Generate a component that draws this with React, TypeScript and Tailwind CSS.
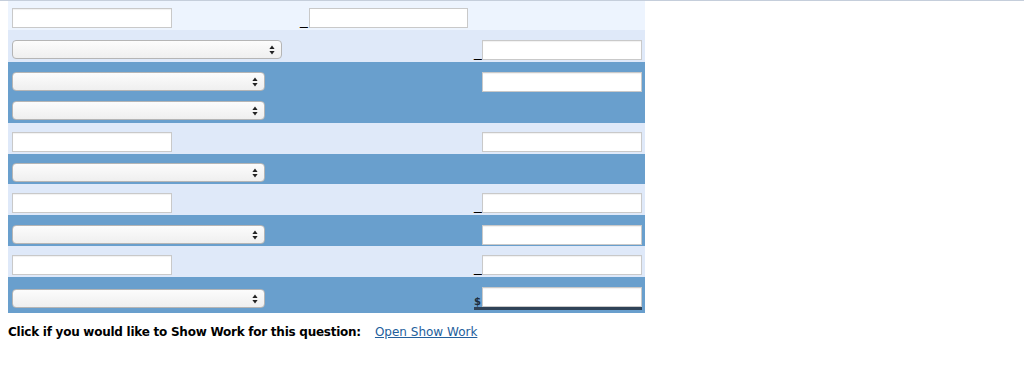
import { ReactNode } from "react";

const TextBox = () => (
  <div className="h-[20px] w-[160px] border border-[#c9c9c9] bg-white shadow-[inset_0_1px_1px_rgba(0,0,0,0.06)]" />
);

const Arrows = () => (
  <svg width="6" height="10" viewBox="0 0 6 10" className="text-[#222]">
    <path d="M3 0.5 L5.6 4 L0.4 4 Z" fill="currentColor" />
    <path d="M3 9.5 L5.6 6 L0.4 6 Z" fill="currentColor" />
  </svg>
);

const Select = ({ wide }: { wide?: boolean }) => (
  <div
    className={
      (wide ? "w-[270px] " : "w-[253px] ") +
      "flex h-[19px] items-center justify-end rounded-[4px] border border-[#b5b5b5] bg-gradient-to-b from-[#fcfcfc] to-[#efefef] pr-[6px]"
    }
  >
    <Arrows />
  </div>
);

const Under = () => (
  <span className="mb-[1px] w-[8px] self-end font-['Liberation_Sans',sans-serif] text-[14px] leading-none text-black">
    _
  </span>
);

const Row = ({
  tone,
  h,
  pt,
  left,
  mid,
  right,
}: {
  tone: "top" | "light" | "blue";
  h: string;
  pt: string;
  left?: ReactNode;
  mid?: ReactNode;
  right?: ReactNode;
}) => {
  const bg = tone === "top" ? "bg-[#edf4fe]" : tone === "light" ? "bg-[#dfe9f9]" : "bg-[#699fcd]";
  return (
    <div className={`flex ${bg} ${h} ${pt}`}>
      <div className="flex w-[288px] flex-col gap-[10px] pl-[4px]">{left}</div>
      <div className="flex w-[176px] items-start pl-[4px]">{mid}</div>
      <div className="flex flex-1 items-start justify-end pr-[3px]">{right}</div>
    </div>
  );
};

export default function App() {
  return (
    <div className="min-h-[376px] bg-white font-['DejaVu_Sans',sans-serif] text-black">
      <div className="h-px w-full bg-[#c5cedb]" />
      <div className="ml-[8px] w-[637px]">
        <Row
          tone="top"
          h="h-[29px]"
          pt="pt-[7px]"
          left={<TextBox />}
          mid={
            <div className="flex items-end">
              <Under />
              <div className="ml-[1px] h-[20px] w-[159px] border border-[#c9c9c9] bg-white" />
            </div>
          }
        />
        <Row
          tone="light"
          h="h-[32px]"
          pt="pt-[10px]"
          left={<Select wide />}
          right={
            <div className="flex items-end">
              <Under />
              <TextBox />
            </div>
          }
        />
        <Row
          tone="blue"
          h="h-[61px]"
          pt="pt-[10px]"
          left={
            <>
              <Select />
              <Select />
            </>
          }
          right={<TextBox />}
        />
        <Row tone="light" h="h-[31px]" pt="pt-[9px]" left={<TextBox />} right={<TextBox />} />
        <Row tone="blue" h="h-[30px]" pt="pt-[9px]" left={<Select />} />
        <Row
          tone="light"
          h="h-[31px]"
          pt="pt-[9px]"
          left={<TextBox />}
          right={
            <div className="flex items-end">
              <Under />
              <TextBox />
            </div>
          }
        />
        <Row tone="blue" h="h-[31px]" pt="pt-[10px]" left={<Select />} right={<TextBox />} />
        <Row
          tone="light"
          h="h-[31px]"
          pt="pt-[9px]"
          left={<TextBox />}
          right={
            <div className="flex items-end">
              <Under />
              <TextBox />
            </div>
          }
        />
        <Row
          tone="blue"
          h="h-[36px]"
          pt="pt-[10px]"
          left={
            <div className="pt-[2px]">
              <Select />
            </div>
          }
          right={
            <div className="flex items-end border-b-[3px] border-[#2f4257]">
              <span className="mb-[-1px] w-[8px] text-[10px] font-bold leading-[12px] text-[#1d2d3d]">$</span>
              <TextBox />
            </div>
          }
        />
      </div>
      <div className="ml-[8px] mt-[12px] flex items-baseline text-[12px] leading-[15px]">
        <span className="font-bold tracking-[-0.25px]">Click if you would like to Show Work for this question:</span>
        <a href="#" className="ml-[14px] text-[#24609c] underline">
          Open Show Work
        </a>
      </div>
    </div>
  );
}
